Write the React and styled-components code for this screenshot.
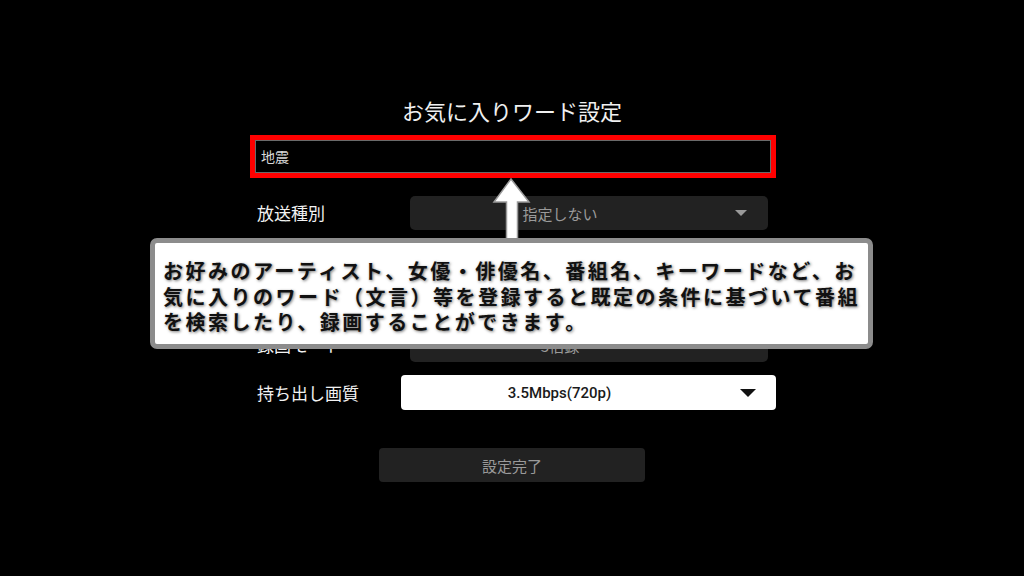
import React from "react";
import styled, { createGlobalStyle } from "styled-components";

const Global = createGlobalStyle`
  html, body { margin: 0; padding: 0; background: #000; }
  body { width: 1024px; height: 576px; overflow: hidden; font-family: "Noto Sans CJK JP", "Noto Sans", sans-serif; }
  #root { width: 1024px; height: 576px; }
`;

const Screen = styled.div`
  position: relative;
  width: 1024px;
  height: 576px;
  background: #000;
  display: flex;
  flex-direction: column;
  align-items: center;
  padding-top: 97px;
  box-sizing: border-box;
`;

const Title = styled.h1`
  margin: 0;
  font-size: 22px;
  font-weight: 400;
  line-height: 26px;
  color: #f0f0f0;
  height: 26px;
`;

const Form = styled.div`
  width: 526px;
  margin-left: 2px;
  display: flex;
  flex-direction: column;
`;

const Highlight = styled.div`
  margin-top: 12px;
  border: 5px solid #ff0000;
  height: 33px;
  display: flex;
`;

const Input = styled.div`
  flex: 1;
  border: 1px solid #6a6a6a;
  background: #000;
  color: #d8d8d8;
  font-size: 14px;
  line-height: 30px;
  padding-left: 5px;
`;

const Rows = styled.div`
  margin-top: 18px;
  display: flex;
  flex-direction: column;
  gap: 10px;
  padding: 0 8px 0 7px;
`;

const Row = styled.div`
  display: flex;
  align-items: center;
  height: ${(p) => (p.$focused ? "35px" : "34px")};
  margin-top: ${(p) => (p.$focused ? "3px" : "0")};
`;

const Label = styled.div`
  width: 153px;
  flex: none;
  font-size: 17px;
  color: #f2f2f2;
  line-height: 24px;
`;

const Select = styled.div`
  flex: 1;
  height: 100%;
  position: relative;
  display: flex;
  align-items: center;
  justify-content: center;
  border-radius: ${(p) => (p.$focused ? "4px" : "5px")};
  background: ${(p) => (p.$focused ? "#ffffff" : "#222222")};
  margin: ${(p) => (p.$focused ? "0 -8px 0 -9px" : "0")};
  padding-right: 58px;
  box-sizing: border-box;
  font-family: ${(p) => (p.$focused ? `Roboto, "Noto Sans CJK JP", sans-serif` : `"Noto Sans CJK JP", sans-serif`)};
  font-size: 15px;
  font-weight: ${(p) => (p.$focused ? 500 : 400)};
  color: ${(p) => (p.$focused ? "#1a1a1a" : "#9a9a9a")};
`;

const Caret = styled.span`
  position: absolute;
  right: ${(p) => (p.$focused ? "20px" : "21px")};
  top: 50%;
  transform: translateY(-50%);
  width: 0;
  height: 0;
  border-left: ${(p) => (p.$focused ? "8px" : "6px")} solid transparent;
  border-right: ${(p) => (p.$focused ? "8px" : "6px")} solid transparent;
  border-top: ${(p) => (p.$focused ? "8px" : "6px")} solid ${(p) => (p.$focused ? "#111" : "#9a9a9a")};
`;

const Done = styled.div`
  margin-top: 38px;
  width: 266px;
  height: 34px;
  border-radius: 4px;
  background: #222222;
  color: #9a9a9a;
  font-size: 15px;
  display: flex;
  align-items: center;
  justify-content: center;
`;

const Arrow = styled.svg`
  position: absolute;
  left: 490px;
  top: 176px;
`;

const Callout = styled.div`
  position: absolute;
  left: 150px;
  top: 238px;
  width: 723px;
  height: 111px;
  box-sizing: border-box;
  background: #fff;
  border: 5px solid #8c8c8c;
  border-radius: 7px;
  padding: 15px 0 0 8px;
  font-family: "Noto Sans CJK JP", sans-serif;
  font-weight: 700;
  font-size: 20px;
  letter-spacing: 2.5px;
  line-height: 25.5px;
  color: #111;
  text-shadow: 1px 1px 3px rgba(0, 0, 0, 0.55);
  white-space: nowrap;
`;

const Line = styled.div``;

const rows = [
  { label: "放送種別", value: "指定しない" },
  { label: "", value: "" },
  { label: "", value: "" },
  { label: "録画モード", value: "3倍録" },
];

export default function App() {
  return (
    <>
      <Global />
      <Screen>
        <Title>お気に入りワード設定</Title>
        <Form>
          <Highlight>
            <Input>地震</Input>
          </Highlight>
          <Rows>
            {rows.map((r, i) => (
              <Row key={i}>
                <Label>{r.label}</Label>
                <Select>
                  {r.value}
                  <Caret />
                </Select>
              </Row>
            ))}
            <Row $focused>
              <Label>持ち出し画質</Label>
              <Select $focused>
                3.5Mbps(720p)
                <Caret $focused />
              </Select>
            </Row>
          </Rows>
        </Form>
        <Done>設定完了</Done>
        <Arrow width="44" height="70" viewBox="0 0 44 70">
          <polygon
            points="21,3 39,26 27.5,26 27.5,68 16.5,68 16.5,26 4,26"
            fill="#fff"
            stroke="#9a9a9a"
            strokeWidth="1.5"
          />
        </Arrow>
        <Callout>
          <Line>お好みのアーティスト、女優・俳優名、番組名、キーワードなど、お</Line>
          <Line>気に入りのワード（文言）等を登録すると既定の条件に基づいて番組</Line>
          <Line>を検索したり、録画することができます。</Line>
        </Callout>
      </Screen>
    </>
  );
}
